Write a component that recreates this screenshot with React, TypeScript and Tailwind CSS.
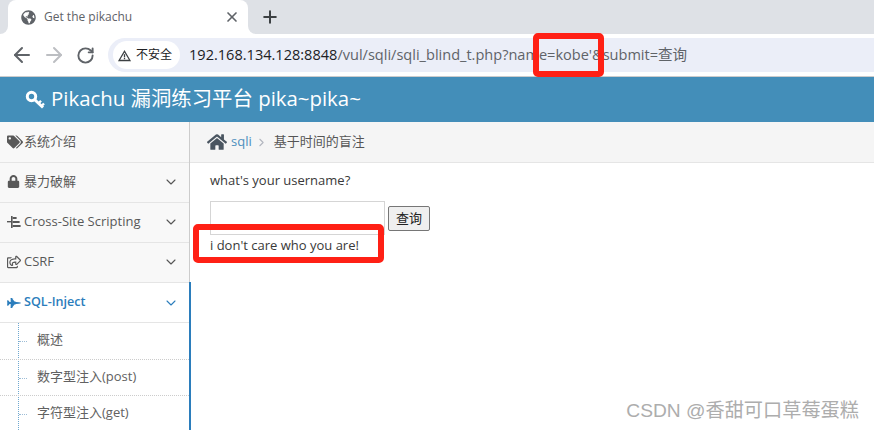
import React from 'react';
import { ChevronDown, ChevronRight, X, Plus, ArrowLeft, ArrowRight, RotateCw } from 'lucide-react';
import { FaTags, FaLock, FaRegShareSquare, FaFighterJet, FaHome, FaGlobeAmericas } from 'react-icons/fa';

const UI_FONT = "font-['Open_Sans','Noto_Sans_CJK_SC',sans-serif]";

const NavItem = ({ icon, label, arrow = true }: { icon: React.ReactNode; label: string; arrow?: boolean }) => (
  <div className="flex h-10 items-center border-b border-[#e5e5e5] bg-[#f8f8f8] pb-[2px] pl-[7px] pr-[10px] text-[13px] text-[#585858]">
    <span className="flex w-[17px] justify-start">{icon}</span>
    <span className="flex-1">{label}</span>
    {arrow && <ChevronDown size={16} strokeWidth={1.6} className="text-[#555]" />}
  </div>
);

const SubItem = ({ label, h }: { label: string; h: string }) => (
  <div className={`relative flex items-center border-b border-dotted border-[#ccc] pb-[2px] pl-[37px] text-[13px] text-[#616161] ${h}`}>
    <span className="absolute left-[19px] top-1/2 w-[8px] border-t border-dotted border-[#9dbdd6]" />
    {label}
  </div>
);

const App: React.FC = () => {
  return (
    <div className={`relative h-[430px] w-[874px] overflow-hidden bg-white ${UI_FONT}`}>
      {/* Tab strip */}
      <div className="flex h-[34px] items-end bg-[#dee1e6] pl-2">
        <div className="relative flex h-[34px] w-[240px] items-center rounded-t-lg bg-white pl-[13px] pr-[8px]">
          <span className="absolute -left-2 bottom-0 h-2 w-2 bg-white">
            <span className="block h-2 w-2 rounded-br-lg bg-[#dee1e6]" />
          </span>
          <span className="absolute -right-2 bottom-0 h-2 w-2 bg-white">
            <span className="block h-2 w-2 rounded-bl-lg bg-[#dee1e6]" />
          </span>
          <FaGlobeAmericas size={15} className="text-[#5f6368]" />
          <span className="ml-[8px] flex-1 text-xs text-[#5f6368]">Get the pikachu</span>
          <X size={16} strokeWidth={2.5} className="text-[#5f6368]" />
        </div>
        <Plus size={20} strokeWidth={2.4} className="mb-[7px] ml-[12px] text-[#3c4043]" />
      </div>

      {/* Address bar */}
      <div className="flex h-[43px] items-center border-b border-[#ccc] bg-white pl-[10px]">
        <ArrowLeft size={24} strokeWidth={2} className="text-[#5f6368]" />
        <ArrowRight size={24} strokeWidth={2} className="ml-[8px] text-[#bcbec2]" />
        <RotateCw size={19} strokeWidth={2.4} className="ml-[10px] text-[#5f6368]" />
        <div className="ml-[13px] flex h-[34px] flex-1 items-center rounded-l-[17px] bg-[#ebeef8] pl-[5px]">
          <div className="flex h-[28px] items-center rounded-[14px] bg-white pl-1 pr-2 text-xs text-[#202124]">
            <svg viewBox="0 0 16 16" className="h-[15px] w-[15px]">
              <path d="M8 2 L15 14 H1 Z M8 4.8 L3.4 12.6 H12.6 Z" fill="#3c4043" fillRule="evenodd" />
              <rect x="7.3" y="6.6" width="1.4" height="3.4" fill="#3c4043" />
              <rect x="7.3" y="10.6" width="1.4" height="1.4" fill="#3c4043" />
            </svg>
            <span className="ml-[4px]">不安全</span>
          </div>
          <span className="ml-[9px] text-[14.55px] text-[#202124]">
            192.168.134.128:8848<span className="text-[#5f6368]">/vul/sqli/sqli_blind_t.php?name=kobe'&amp;submit=查询</span>
          </span>
        </div>
      </div>

      {/* Site header */}
      <div className="flex h-[45px] items-center bg-[#438eb9] pl-[25px] text-[20.4px] text-white">
        <svg viewBox="0 0 20 20" className="h-[20px] w-[20px]" fill="none" stroke="currentColor">
          <circle cx="6.5" cy="6.5" r="4.2" strokeWidth="3" />
          <path d="M9.5 9.5 L18 17.5" strokeWidth="3" />
          <path d="M13.5 13.5 L16 10.8 M16.5 16 L19 13.5" strokeWidth="2.4" />
        </svg>
        <span className="ml-[6px] pb-[3px]">Pikachu 漏洞练习平台 pika~pika~</span>
      </div>

      {/* Page body */}
      <div className="flex h-[308px]">
        <aside className="w-[190px] shrink-0 border-r border-[#ccc]">
          <div className="h-px bg-[#f8f8f8]" />
          <NavItem icon={<FaTags size={16} />} label="系统介绍" arrow={false} />
          <NavItem icon={<FaLock size={13} />} label="暴力破解" />
          <NavItem
            icon={
              <svg viewBox="0 0 14 12" className="h-[12px] w-[14px]" fill="#585858">
                <rect x="0" y="5" width="4" height="1.4" />
                <rect x="4" y="0" width="1.6" height="12" />
                <rect x="5.6" y="1" width="4" height="2" />
                <rect x="5.6" y="5" width="7" height="2" />
                <rect x="5.6" y="9" width="8" height="2" />
              </svg>
            }
            label="Cross-Site Scripting"
          />
          <NavItem icon={<FaRegShareSquare size={14} />} label="CSRF" />
          <div className="flex h-10 items-center border-b border-[#e5e5e5] bg-white pl-[7px] pr-[10px] text-[12.6px] font-semibold text-[#2b7dbc]">
            <span className="flex w-[17px]"><FaFighterJet size={14} /></span>
            <span className="flex-1">SQL-Inject</span>
            <ChevronDown size={16} strokeWidth={1.6} />
          </div>
          <div className="relative">
            <span className="absolute bottom-0 left-[18px] top-0 border-l border-dotted border-[#6fa8d0]" />
            <SubItem label="概述" h="h-[37px]" />
            <SubItem label="数字型注入(post)" h="h-[36px]" />
            <SubItem label="字符型注入(get)" h="h-[36px]" />
          </div>
          <span className="absolute left-[189px] top-[282px] h-[148px] w-[2px] bg-[#2b7dbc]" />
        </aside>

        <main className="flex-1">
          <div className="flex h-[41px] items-center border-b border-[#e5e5e5] bg-[#f5f5f5] pl-[17px] text-[13px]">
            <FaHome size={20} className="text-[#4a5560]" />
            <span className="ml-[4px] text-[#4c8fbd]">sqli</span>
            <ChevronRight size={13} className="ml-[3px] text-[#b2b6bf]" />
            <span className="ml-[6px] text-[#555]">基于时间的盲注</span>
          </div>
          <div className="pl-5 text-[13px] leading-[18px] text-[#393939]">
            <p className="pt-[8px]">what's your username?</p>
            <div className="mt-[12px] flex items-end">
              <div className="h-[34px] w-[175px] border border-[#d5d5d5] bg-white" />
              <button className="mb-[4px] ml-[3px] h-[25px] w-[42px] rounded-[2px] border border-[#767676] bg-[#efefef] text-[13px] leading-none text-[#222]">查询</button>
            </div>
            <p className="mt-[1px]">i don't care who you are!</p>
          </div>
        </main>
      </div>

      {/* Annotation boxes */}
      <div className="absolute left-[533px] top-[33px] h-[44px] w-[71px] rounded-[5px] border-[6px] border-[#ff2015]" />
      <div className="absolute left-[193px] top-[224px] h-[39px] w-[191px] rounded-[5px] border-[6px] border-[#ff2015]" />

      {/* Watermark */}
      <div className="absolute right-[15px] top-[399px] font-['Liberation_Sans','Noto_Sans_CJK_SC',sans-serif] text-[19.2px] leading-[24px] text-[#adadad]">
        CSDN @香甜可口草莓蛋糕
      </div>
    </div>
  );
};

export default App;
